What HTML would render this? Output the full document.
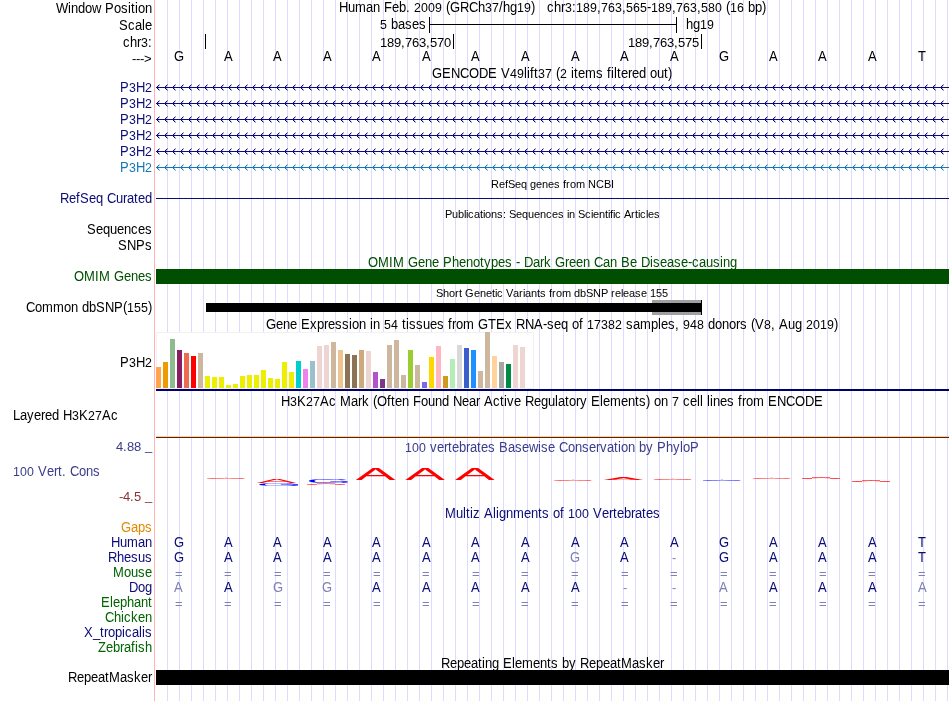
<!DOCTYPE html>
<html lang="en"><head><meta charset="utf-8"><title>UCSC Genome Browser - hg19 chr3:189,763,565-189,763,580</title>
<style>
html,body{margin:0;padding:0;background:#fff;}
body{width:950px;height:701px;overflow:hidden;}
svg{display:block;will-change:transform;}
text{font-family:"Liberation Sans",Arial,Helvetica,sans-serif;font-size:13px;fill:#000;}
text{white-space:pre;}
.s{font-size:11px;}.d{font-size:12.4px;}
.nv{fill:#0c0c78;}.lb{fill:#1478b4;}.gr{fill:#005000;}.dg{fill:#006400;}.og{fill:#e08a00;}.pu{fill:#3c3c8c;}.br{fill:#8b3232;}.lt{fill:#8080b8;}
.g{shape-rendering:crispEdges;}
</style></head><body>
<svg width="950" height="701" viewBox="0 0 950 701">
<defs>
<pattern id="chvA" x="156" y="0" width="8" height="7" patternUnits="userSpaceOnUse" shape-rendering="crispEdges" fill="#0c0c78">
<rect x="1" y="2" width="1" height="3"/>
<rect x="2" y="1" width="1" height="1"/><rect x="2" y="5" width="1" height="1"/>
<rect x="2" y="2" width="1" height="1" opacity=".3"/><rect x="2" y="4" width="1" height="1" opacity=".3"/>
<rect x="3" y="0" width="1" height="1" opacity=".45"/><rect x="3" y="6" width="1" height="1" opacity=".45"/>
<rect x="3" y="1" width="1" height="1" opacity=".2"/><rect x="3" y="5" width="1" height="1" opacity=".2"/>
</pattern>
<pattern id="chvB" x="156" y="0" width="8" height="7" patternUnits="userSpaceOnUse" shape-rendering="crispEdges" fill="#1478b4">
<rect x="1" y="2" width="1" height="3"/>
<rect x="2" y="1" width="1" height="1"/><rect x="2" y="5" width="1" height="1"/>
<rect x="2" y="2" width="1" height="1" opacity=".3"/><rect x="2" y="4" width="1" height="1" opacity=".3"/>
<rect x="3" y="0" width="1" height="1" opacity=".45"/><rect x="3" y="6" width="1" height="1" opacity=".45"/>
<rect x="3" y="1" width="1" height="1" opacity=".2"/><rect x="3" y="5" width="1" height="1" opacity=".2"/>
</pattern>
</defs>
<rect width="950" height="701" fill="#fff"/>
<g class="g" fill="#dcdcff">
<rect x="167" y="0" width="1" height="701"/>
<rect x="179" y="0" width="1" height="701"/>
<rect x="191" y="0" width="1" height="701"/>
<rect x="203" y="0" width="1" height="701"/>
<rect x="215" y="0" width="1" height="701"/>
<rect x="227" y="0" width="1" height="701"/>
<rect x="239" y="0" width="1" height="701"/>
<rect x="251" y="0" width="1" height="701"/>
<rect x="263" y="0" width="1" height="701"/>
<rect x="275" y="0" width="1" height="701"/>
<rect x="287" y="0" width="1" height="701"/>
<rect x="299" y="0" width="1" height="701"/>
<rect x="311" y="0" width="1" height="701"/>
<rect x="323" y="0" width="1" height="701"/>
<rect x="335" y="0" width="1" height="701"/>
<rect x="347" y="0" width="1" height="701"/>
<rect x="359" y="0" width="1" height="701"/>
<rect x="371" y="0" width="1" height="701"/>
<rect x="383" y="0" width="1" height="701"/>
<rect x="395" y="0" width="1" height="701"/>
<rect x="407" y="0" width="1" height="701"/>
<rect x="419" y="0" width="1" height="701"/>
<rect x="431" y="0" width="1" height="701"/>
<rect x="443" y="0" width="1" height="701"/>
<rect x="455" y="0" width="1" height="701"/>
<rect x="467" y="0" width="1" height="701"/>
<rect x="479" y="0" width="1" height="701"/>
<rect x="491" y="0" width="1" height="701"/>
<rect x="503" y="0" width="1" height="701"/>
<rect x="515" y="0" width="1" height="701"/>
<rect x="527" y="0" width="1" height="701"/>
<rect x="539" y="0" width="1" height="701"/>
<rect x="551" y="0" width="1" height="701"/>
<rect x="563" y="0" width="1" height="701"/>
<rect x="575" y="0" width="1" height="701"/>
<rect x="587" y="0" width="1" height="701"/>
<rect x="599" y="0" width="1" height="701"/>
<rect x="611" y="0" width="1" height="701"/>
<rect x="623" y="0" width="1" height="701"/>
<rect x="635" y="0" width="1" height="701"/>
<rect x="647" y="0" width="1" height="701"/>
<rect x="659" y="0" width="1" height="701"/>
<rect x="671" y="0" width="1" height="701"/>
<rect x="683" y="0" width="1" height="701"/>
<rect x="695" y="0" width="1" height="701"/>
<rect x="707" y="0" width="1" height="701"/>
<rect x="719" y="0" width="1" height="701"/>
<rect x="731" y="0" width="1" height="701"/>
<rect x="743" y="0" width="1" height="701"/>
<rect x="755" y="0" width="1" height="701"/>
<rect x="767" y="0" width="1" height="701"/>
<rect x="779" y="0" width="1" height="701"/>
<rect x="791" y="0" width="1" height="701"/>
<rect x="803" y="0" width="1" height="701"/>
<rect x="815" y="0" width="1" height="701"/>
<rect x="827" y="0" width="1" height="701"/>
<rect x="839" y="0" width="1" height="701"/>
<rect x="851" y="0" width="1" height="701"/>
<rect x="863" y="0" width="1" height="701"/>
<rect x="875" y="0" width="1" height="701"/>
<rect x="887" y="0" width="1" height="701"/>
<rect x="899" y="0" width="1" height="701"/>
<rect x="911" y="0" width="1" height="701"/>
<rect x="923" y="0" width="1" height="701"/>
<rect x="935" y="0" width="1" height="701"/>
<rect x="947" y="0" width="1" height="701"/>
</g>
<rect class="g" x="154" y="0" width="1" height="701" fill="#ffb4b4"/>
<g class="g" fill="#000">
<rect x="429" y="17" width="1" height="16"/><rect x="676" y="17" width="1" height="16"/><rect x="429" y="24" width="248" height="1"/>
<rect x="205" y="34" width="1" height="15"/><rect x="453" y="34" width="1" height="15"/><rect x="701" y="34" width="1" height="15"/>
</g>
<text transform="matrix(1,0,0,1.08,0,-1.04)" x="56 68 71 78 85 92 101 105 114 121 128 131 135 138 145" y="13">Window Position</text>
<text transform="matrix(1,0,0,1.08,0,-2.40)" x="119 128 135 142 145" y="30">Scale</text>
<text transform="matrix(1,0,0,1.08,0,-3.76)" x="123 130 137 141 148" y="47">chr<tspan class="d">3</tspan>:</text>
<text x="132 136 140 144" y="63">---&gt;</text>
<text transform="matrix(1,0,0,1.08,0,-0.96)" x="339 348 355 366 373 380 384 392 399 406 410 414 421 428 435 442 446 450 460 469 478 485 492 499 503 510 517 524 531" y="12">Human Feb. <tspan class="d">2009</tspan> (GRCh<tspan class="d">37</tspan>/hg<tspan class="d">19</tspan>)</text>
<text transform="matrix(1,0,0,1.08,0,-0.96)" x="547 554 561 565 572 576 583 590 597 601 608 615 622 626 633 640 647 651 658 665 672 676 683 690 697 701 708 715 722 726 730 737 744 748 755 762" y="12">chr<tspan class="d">3</tspan>:<tspan class="d">189</tspan>,<tspan class="d">763</tspan>,<tspan class="d">565</tspan>-<tspan class="d">189</tspan>,<tspan class="d">763</tspan>,<tspan class="d">580</tspan> (<tspan class="d">16</tspan> bp)</text>
<text transform="matrix(1,0,0,1.08,0,-2.32)" x="380 387 391 398 405 412 419" y="29"><tspan class="d">5</tspan> bases</text>
<text transform="matrix(1,0,0,1.08,0,-2.32)" x="686 693 700 707" y="29">hg<tspan class="d">19</tspan></text>
<text x="380 387 394 401 405 412 419 426 430 437 444" y="47">189,763,570</text>
<text x="628 635 642 649 653 660 667 674 678 685 692" y="47">189,763,575</text>
<text transform="matrix(1,0,0,1.08,0,-4.88)" x="174" y="61">G</text>
<text transform="matrix(1,0,0,1.08,0,-4.88)" x="224" y="61">A</text>
<text transform="matrix(1,0,0,1.08,0,-4.88)" x="273" y="61">A</text>
<text transform="matrix(1,0,0,1.08,0,-4.88)" x="323" y="61">A</text>
<text transform="matrix(1,0,0,1.08,0,-4.88)" x="372" y="61">A</text>
<text transform="matrix(1,0,0,1.08,0,-4.88)" x="422" y="61">A</text>
<text transform="matrix(1,0,0,1.08,0,-4.88)" x="471" y="61">A</text>
<text transform="matrix(1,0,0,1.08,0,-4.88)" x="521" y="61">A</text>
<text transform="matrix(1,0,0,1.08,0,-4.88)" x="571" y="61">A</text>
<text transform="matrix(1,0,0,1.08,0,-4.88)" x="620" y="61">A</text>
<text transform="matrix(1,0,0,1.08,0,-4.88)" x="670" y="61">A</text>
<text transform="matrix(1,0,0,1.08,0,-4.88)" x="719" y="61">G</text>
<text transform="matrix(1,0,0,1.08,0,-4.88)" x="769" y="61">A</text>
<text transform="matrix(1,0,0,1.08,0,-4.88)" x="818" y="61">A</text>
<text transform="matrix(1,0,0,1.08,0,-4.88)" x="868" y="61">A</text>
<text transform="matrix(1,0,0,1.08,0,-4.88)" x="918" y="61">T</text>
<text transform="matrix(1,0,0,1.08,0,-6.24)" x="432 442 451 460 469 479 488 497 501 510 517 524 527 530 534 538 545 552 556 560 567 571 574 578 585 596 603 607 611 614 617 621 628 632 639 646 650 657 664 668" y="78">GENCODE V<tspan class="d">49</tspan>lift<tspan class="d">37</tspan> (<tspan class="d">2</tspan> items filtered out)</text>
<text transform="matrix(1,0,0,1.08,0,-7.36)" x="120 129 136 145" y="92" class="nv">P<tspan class="d">3</tspan>H<tspan class="d">2</tspan></text>
<rect class="g" x="156" y="87" width="793" height="1" fill="#0c0c78"/><rect x="156" y="0" width="793" height="7" fill="url(#chvA)" transform="translate(0,84)"/>
<text transform="matrix(1,0,0,1.08,0,-8.64)" x="120 129 136 145" y="108" class="nv">P<tspan class="d">3</tspan>H<tspan class="d">2</tspan></text>
<rect class="g" x="156" y="103" width="793" height="1" fill="#0c0c78"/><rect x="156" y="0" width="793" height="7" fill="url(#chvA)" transform="translate(0,100)"/>
<text transform="matrix(1,0,0,1.08,0,-9.92)" x="120 129 136 145" y="124" class="nv">P<tspan class="d">3</tspan>H<tspan class="d">2</tspan></text>
<rect class="g" x="156" y="119" width="793" height="1" fill="#0c0c78"/><rect x="156" y="0" width="793" height="7" fill="url(#chvA)" transform="translate(0,116)"/>
<text transform="matrix(1,0,0,1.08,0,-11.20)" x="120 129 136 145" y="140" class="nv">P<tspan class="d">3</tspan>H<tspan class="d">2</tspan></text>
<rect class="g" x="156" y="135" width="793" height="1" fill="#0c0c78"/><rect x="156" y="0" width="793" height="7" fill="url(#chvA)" transform="translate(0,132)"/>
<text transform="matrix(1,0,0,1.08,0,-12.48)" x="120 129 136 145" y="156" class="nv">P<tspan class="d">3</tspan>H<tspan class="d">2</tspan></text>
<rect class="g" x="156" y="151" width="793" height="1" fill="#0c0c78"/><rect x="156" y="0" width="793" height="7" fill="url(#chvA)" transform="translate(0,148)"/>
<text transform="matrix(1,0,0,1.08,0,-13.76)" x="120 129 136 145" y="172" class="lb">P<tspan class="d">3</tspan>H<tspan class="d">2</tspan></text>
<rect class="g" x="156" y="167" width="793" height="1" fill="#1478b4"/><rect x="156" y="0" width="793" height="7" fill="url(#chvB)" transform="translate(0,164)"/>
<text transform="matrix(1,0,0,1.03,0,-5.64)" x="491 499 505 508 515 521 527 530 536 542 548 554 560 563 566 570 576 585 588 596 604 611" y="188" class="s">RefSeq genes from NCBI</text>
<text transform="matrix(1,0,0,1.08,0,-16.24)" x="60 69 76 80 89 96 103 107 116 123 127 134 138 145" y="203" class="nv">RefSeq Curated</text>
<rect class="g" x="156" y="198" width="793" height="1" fill="#0c0c78"/>
<text transform="matrix(1,0,0,1.03,0,-6.54)" x="445 452 458 464 466 468 474 480 483 485 491 497 503 506 509 516 522 528 534 540 546 552 558 564 567 569 575 578 585 591 593 599 605 608 610 613 615 621 624 631 635 638 640 646 648 654" y="218" class="s">Publications: Sequences in Scientific Articles</text>
<text transform="matrix(1,0,0,1.08,0,-18.72)" x="87 96 103 110 117 124 131 138 145" y="234">Sequences</text>
<text transform="matrix(1,0,0,1.08,0,-20.00)" x="118 127 136 145" y="250">SNPs</text>
<text transform="matrix(1,0,0,1.08,0,-21.36)" x="368 378 389 393 404 408 418 425 432 439 443 452 459 466 473 480 484 491 498 505 512 516 520 524 533 540 544 551 555 565 569 576 583 590 594 603 610 617 621 630 637 641 650 653 660 667 674 681 688 692 699 706 713 720 723 730" y="267" class="gr">OMIM Gene Phenotypes - Dark Green Can Be Disease-causing</text>
<text transform="matrix(1,0,0,1.08,0,-22.48)" x="74 84 95 99 110 114 124 131 138 145" y="281" class="gr">OMIM Genes</text>
<rect class="g" x="156" y="269" width="793" height="15" fill="#004f00"/>
<text transform="matrix(1,0,0,1.03,0,-8.91)" x="436 443 449 455 459 462 465 474 480 486 492 495 497 503 506 513 519 523 525 531 537 540 546 549 552 556 562 571 574 580 586 593 601 608 611 615 621 623 629 635 641 647 650 656 662" y="297" class="s">Short Genetic Variants from dbSNP release 155</text>
<text transform="matrix(1,0,0,1.08,0,-24.96)" x="26 35 42 53 64 71 78 82 89 96 105 114 123 127 134 141 148" y="312">Common dbSNP(<tspan class="d">155</tspan>)</text>
<g class="g"><rect x="652" y="300" width="50" height="15" fill="#a0a0a0"/><rect x="206" y="303" width="496" height="9" fill="#000"/><rect x="701" y="300" width="1" height="15" fill="#000"/></g>
<text transform="matrix(1,0,0,1.08,0,-26.32)" x="266 276 283 290 297 301 310 317 324 328 335 342 349 352 359 366 370 373 380 384 391 398 402 406 409 416 423 430 437 444 448 452 456 463 474 478 488 496 505 512 516 525 534 543 547 554 561 568 572 579 583 587 594 601 608 615 622 626 633 640 651 658 661 668 675 679 683 690 697 704 708 715 722 729 736 740 747 751 755 764 771 775 779 788 795 802 806 813 820 827 834" y="329">Gene Expression in <tspan class="d">54</tspan> tissues from GTEx RNA-seq of <tspan class="d">17382</tspan> samples, <tspan class="d">948</tspan> donors (V<tspan class="d">8</tspan>, Aug <tspan class="d">2019</tspan>)</text>
<g class="g">
<rect x="156.5" y="332.5" width="377" height="56" fill="#fff" stroke="#f1f1f1" stroke-width="1"/>
<rect x="156" y="367" width="5" height="21" fill="#FFA54F"/>
<rect x="163" y="362" width="5" height="26" fill="#EE9A00"/>
<rect x="170" y="339" width="5" height="49" fill="#8FBC8F"/>
<rect x="177" y="350" width="5" height="38" fill="#8B1C62"/>
<rect x="184" y="353" width="5" height="35" fill="#EE6A50"/>
<rect x="191" y="356" width="5" height="32" fill="#FF0000"/>
<rect x="198" y="353" width="5" height="35" fill="#CDB79E"/>
<rect x="205" y="376" width="5" height="12" fill="#EEEE00"/>
<rect x="212" y="377" width="5" height="11" fill="#EEEE00"/>
<rect x="219" y="377" width="5" height="11" fill="#EEEE00"/>
<rect x="226" y="385" width="5" height="3" fill="#EEEE00"/>
<rect x="233" y="384" width="5" height="4" fill="#EEEE00"/>
<rect x="240" y="376" width="5" height="12" fill="#EEEE00"/>
<rect x="247" y="375" width="5" height="13" fill="#EEEE00"/>
<rect x="254" y="375" width="5" height="13" fill="#EEEE00"/>
<rect x="261" y="370" width="5" height="18" fill="#EEEE00"/>
<rect x="268" y="378" width="5" height="10" fill="#EEEE00"/>
<rect x="275" y="379" width="5" height="9" fill="#EEEE00"/>
<rect x="282" y="362" width="5" height="26" fill="#EEEE00"/>
<rect x="289" y="372" width="5" height="16" fill="#EEEE00"/>
<rect x="296" y="361" width="5" height="27" fill="#00CDCD"/>
<rect x="303" y="369" width="5" height="19" fill="#EE82EE"/>
<rect x="310" y="361" width="5" height="27" fill="#9AC0CD"/>
<rect x="317" y="346" width="5" height="42" fill="#EED5D2"/>
<rect x="324" y="345" width="5" height="43" fill="#EED5D2"/>
<rect x="331" y="342" width="5" height="46" fill="#CDB79E"/>
<rect x="338" y="350" width="5" height="38" fill="#EEC591"/>
<rect x="345" y="354" width="5" height="34" fill="#8B7355"/>
<rect x="352" y="355" width="5" height="33" fill="#8B7355"/>
<rect x="359" y="350" width="5" height="38" fill="#CDAA7D"/>
<rect x="366" y="351" width="5" height="37" fill="#EED5D2"/>
<rect x="373" y="372" width="5" height="16" fill="#B452CD"/>
<rect x="380" y="379" width="5" height="9" fill="#7A378B"/>
<rect x="387" y="345" width="5" height="43" fill="#CDB79E"/>
<rect x="394" y="340" width="5" height="48" fill="#CDB79E"/>
<rect x="401" y="375" width="5" height="13" fill="#CDB79E"/>
<rect x="408" y="350" width="5" height="38" fill="#9ACD32"/>
<rect x="415" y="365" width="5" height="23" fill="#CDB79E"/>
<rect x="422" y="382" width="5" height="6" fill="#7A67EE"/>
<rect x="429" y="357" width="5" height="31" fill="#FFD700"/>
<rect x="436" y="346" width="5" height="42" fill="#FFB6C1"/>
<rect x="443" y="376" width="5" height="12" fill="#CD9B1D"/>
<rect x="450" y="359" width="5" height="29" fill="#B4EEB4"/>
<rect x="457" y="345" width="5" height="43" fill="#D9D9D9"/>
<rect x="464" y="348" width="5" height="40" fill="#3A5FCD"/>
<rect x="471" y="350" width="5" height="38" fill="#1E90FF"/>
<rect x="478" y="371" width="5" height="17" fill="#CDB79E"/>
<rect x="485" y="332" width="5" height="56" fill="#CDB79E"/>
<rect x="492" y="356" width="5" height="32" fill="#FFD39B"/>
<rect x="499" y="362" width="5" height="26" fill="#A6A6A6"/>
<rect x="506" y="364" width="5" height="24" fill="#008B45"/>
<rect x="513" y="345" width="5" height="43" fill="#EED5D2"/>
<rect x="520" y="347" width="5" height="41" fill="#EED5D2"/>
<rect x="156" y="389" width="793" height="2" fill="#00006a"/>
</g>
<text transform="matrix(1,0,0,1.08,0,-29.36)" x="120 129 136 145" y="367">P<tspan class="d">3</tspan>H<tspan class="d">2</tspan></text>
<text transform="matrix(1,0,0,1.08,0,-32.48)" x="281 290 297 306 313 320 329 336 340 351 358 362 369 373 377 387 391 395 402 409 413 421 428 435 442 449 453 462 469 476 480 484 493 500 504 507 514 521 525 534 541 548 555 558 565 569 576 580 587 591 600 603 610 621 628 635 639 646 650 654 661 668 672 679 683 690 697 700 703 707 710 713 720 727 734 738 742 746 753 764 768 777 786 795 805 814" y="406">H<tspan class="d">3</tspan>K<tspan class="d">27</tspan>Ac Mark (Often Found Near Active Regulatory Elements) on <tspan class="d">7</tspan> cell lines from ENCODE</text>
<text transform="matrix(1,0,0,1.08,0,-33.60)" x="13 20 27 34 41 45 52 59 63 72 79 88 95 102 111" y="420">Layered H<tspan class="d">3</tspan>K<tspan class="d">27</tspan>Ac</text>
<g class="g"><rect x="156" y="436" width="793" height="1" fill="#ffd27a"/><rect x="156" y="437" width="793" height="1" fill="#5a1e28"/></g>
<text x="116 123 127 134 141" y="451" class="pu">4.88 </text>
<text x="145" y="450" class="pu">_</text>
<text transform="matrix(1,0,0,1.08,0,-36.16)" x="405 412 419 426 430 437 444 448 452 459 466 470 477 481 488 495 499 508 515 522 529 538 541 548 555 559 568 575 582 589 596 600 607 614 618 621 628 635 639 646 653 657 666 673 680 683 690" y="452" class="pu"><tspan class="d">100</tspan> vertebrates Basewise Conservation by PhyloP</text>
<text transform="matrix(1,0,0,1.08,0,-38.08)" x="13 20 27 34 38 47 54 58 62 66 70 79 86 93" y="476" class="pu"><tspan class="d">100</tspan> Vert. Cons</text>
<text x="119 123 130 134 141" y="501" class="br">-4.5 </text>
<text x="145" y="500" class="br">_</text>
<rect class="g" x="207" y="478" width="37" height="1" fill="#ff0000" opacity="0.35"/>
<text transform="translate(226.9,479.1) scale(5.957,0.174)" x="0" y="0" style="font-size:10px;text-anchor:middle;fill:#ff0000">A</text>
<text transform="translate(276.5,482.8) scale(5.957,0.465)" x="0" y="0" style="font-size:10px;text-anchor:middle;fill:#ff0000">A</text>
<text transform="translate(279.4,486.2) scale(5.957,0.378)" x="0" y="0" style="font-size:10px;text-anchor:middle;fill:#0000ff">G</text>
<text transform="translate(329.0,483.2) scale(5.957,0.494)" x="0" y="0" style="font-size:10px;text-anchor:middle;fill:#0000ff">G</text>
<text transform="translate(375.6,480.0) scale(5.957,1.599)" x="0" y="0" style="font-size:10px;text-anchor:middle;fill:#ff0000">A</text>
<text transform="translate(425.2,480.0) scale(5.957,1.599)" x="0" y="0" style="font-size:10px;text-anchor:middle;fill:#ff0000">A</text>
<text transform="translate(474.8,480.0) scale(5.957,1.599)" x="0" y="0" style="font-size:10px;text-anchor:middle;fill:#ff0000">A</text>
<rect class="g" x="554" y="480" width="37" height="1" fill="#ff0000" opacity="0.35"/>
<text transform="translate(573.9,481.1) scale(5.957,0.174)" x="0" y="0" style="font-size:10px;text-anchor:middle;fill:#ff0000">A</text>
<text transform="translate(623.4,479.9) scale(5.957,0.436)" x="0" y="0" style="font-size:10px;text-anchor:middle;fill:#ff0000">A</text>
<rect class="g" x="654" y="479" width="37" height="1" fill="#ff0000" opacity="0.35"/>
<text transform="translate(673.0,480.1) scale(5.957,0.174)" x="0" y="0" style="font-size:10px;text-anchor:middle;fill:#ff0000">A</text>
<rect class="g" x="703" y="480" width="37" height="1" fill="#0000ff" opacity="0.35"/>
<text transform="translate(722.6,481.1) scale(5.957,0.174)" x="0" y="0" style="font-size:10px;text-anchor:middle;fill:#0000ff">A</text>
<rect class="g" x="753" y="478" width="37" height="1" fill="#ff0000" opacity="0.35"/>
<text transform="translate(772.1,479.1) scale(5.957,0.174)" x="0" y="0" style="font-size:10px;text-anchor:middle;fill:#ff0000">A</text>
<g class="g" fill="#ff0000" opacity="0.6"><rect x="802" y="478" width="10" height="1"/><rect x="812" y="477" width="18" height="1"/><rect x="830" y="478" width="10" height="1"/></g>
<text transform="translate(821.7,478.9) scale(5.957,0.247)" x="0" y="0" style="font-size:10px;text-anchor:middle;fill:#ff0000">A</text>
<g class="g" fill="#ff0000" opacity="0.6"><rect x="852" y="481" width="10" height="1"/><rect x="862" y="480" width="18" height="1"/><rect x="880" y="481" width="10" height="1"/></g>
<text transform="translate(871.3,481.9) scale(5.957,0.247)" x="0" y="0" style="font-size:10px;text-anchor:middle;fill:#ff0000">A</text>
<g class="g" fill="#ff0000" opacity="0.45"><rect x="307" y="484" width="10" height="1"/><rect x="317" y="483" width="18" height="1"/><rect x="335" y="484" width="10" height="1"/></g>
<text transform="translate(326.1,484.9) scale(5.957,0.247)" x="0" y="0" style="font-size:10px;text-anchor:middle;fill:#ff0000">A</text>
<text transform="matrix(1,0,0,1.08,0,-41.44)" x="445 456 463 466 470 473 480 484 493 496 499 506 513 524 531 538 542 549 553 560 564 568 575 582 589 593 602 609 613 617 624 631 635 642 646 653" y="518" class="nv">Multiz Alignments of <tspan class="d">100</tspan> Vertebrates</text>
<text transform="matrix(1,0,0,1.08,0,-42.56)" x="121 131 138 145" y="532" class="og">Gaps</text>
<text transform="matrix(1,0,0,1.08,0,-43.76)" x="111 120 127 138 145" y="547" class="nv">Human</text>
<text transform="matrix(1,0,0,1.08,0,-43.76)" x="174" y="547" class="nv">G</text>
<text transform="matrix(1,0,0,1.08,0,-43.76)" x="224" y="547" class="nv">A</text>
<text transform="matrix(1,0,0,1.08,0,-43.76)" x="273" y="547" class="nv">A</text>
<text transform="matrix(1,0,0,1.08,0,-43.76)" x="323" y="547" class="nv">A</text>
<text transform="matrix(1,0,0,1.08,0,-43.76)" x="372" y="547" class="nv">A</text>
<text transform="matrix(1,0,0,1.08,0,-43.76)" x="422" y="547" class="nv">A</text>
<text transform="matrix(1,0,0,1.08,0,-43.76)" x="471" y="547" class="nv">A</text>
<text transform="matrix(1,0,0,1.08,0,-43.76)" x="521" y="547" class="nv">A</text>
<text transform="matrix(1,0,0,1.08,0,-43.76)" x="571" y="547" class="nv">A</text>
<text transform="matrix(1,0,0,1.08,0,-43.76)" x="620" y="547" class="nv">A</text>
<text transform="matrix(1,0,0,1.08,0,-43.76)" x="670" y="547" class="nv">A</text>
<text transform="matrix(1,0,0,1.08,0,-43.76)" x="719" y="547" class="nv">G</text>
<text transform="matrix(1,0,0,1.08,0,-43.76)" x="769" y="547" class="nv">A</text>
<text transform="matrix(1,0,0,1.08,0,-43.76)" x="818" y="547" class="nv">A</text>
<text transform="matrix(1,0,0,1.08,0,-43.76)" x="868" y="547" class="nv">A</text>
<text transform="matrix(1,0,0,1.08,0,-43.76)" x="918" y="547" class="nv">T</text>
<text transform="matrix(1,0,0,1.08,0,-44.96)" x="108 117 124 131 138 145" y="562" class="nv">Rhesus</text>
<text transform="matrix(1,0,0,1.08,0,-44.96)" x="174" y="562" class="nv">G</text>
<text transform="matrix(1,0,0,1.08,0,-44.96)" x="224" y="562" class="nv">A</text>
<text transform="matrix(1,0,0,1.08,0,-44.96)" x="273" y="562" class="nv">A</text>
<text transform="matrix(1,0,0,1.08,0,-44.96)" x="323" y="562" class="nv">A</text>
<text transform="matrix(1,0,0,1.08,0,-44.96)" x="372" y="562" class="nv">A</text>
<text transform="matrix(1,0,0,1.08,0,-44.96)" x="422" y="562" class="nv">A</text>
<text transform="matrix(1,0,0,1.08,0,-44.96)" x="471" y="562" class="nv">A</text>
<text transform="matrix(1,0,0,1.08,0,-44.96)" x="521" y="562" class="nv">A</text>
<text transform="matrix(1,0,0,1.08,0,-44.96)" x="570" y="562" class="lt">G</text>
<text transform="matrix(1,0,0,1.08,0,-44.96)" x="620" y="562" class="nv">A</text>
<text x="672" y="562" class="lt">-</text>
<text transform="matrix(1,0,0,1.08,0,-44.96)" x="719" y="562" class="nv">G</text>
<text transform="matrix(1,0,0,1.08,0,-44.96)" x="769" y="562" class="nv">A</text>
<text transform="matrix(1,0,0,1.08,0,-44.96)" x="818" y="562" class="nv">A</text>
<text transform="matrix(1,0,0,1.08,0,-44.96)" x="868" y="562" class="nv">A</text>
<text transform="matrix(1,0,0,1.08,0,-44.96)" x="918" y="562" class="nv">T</text>
<text transform="matrix(1,0,0,1.08,0,-46.16)" x="113 124 131 138 145" y="577" class="dg">Mouse</text>
<text x="175" y="578" class="lt">=</text>
<text x="224" y="578" class="lt">=</text>
<text x="274" y="578" class="lt">=</text>
<text x="323" y="578" class="lt">=</text>
<text x="373" y="578" class="lt">=</text>
<text x="422" y="578" class="lt">=</text>
<text x="472" y="578" class="lt">=</text>
<text x="521" y="578" class="lt">=</text>
<text x="571" y="578" class="lt">=</text>
<text x="621" y="578" class="lt">=</text>
<text x="670" y="578" class="lt">=</text>
<text x="720" y="578" class="lt">=</text>
<text x="769" y="578" class="lt">=</text>
<text x="819" y="578" class="lt">=</text>
<text x="868" y="578" class="lt">=</text>
<text x="918" y="578" class="lt">=</text>
<text transform="matrix(1,0,0,1.08,0,-47.36)" x="129 138 145" y="592" class="nv">Dog</text>
<text transform="matrix(1,0,0,1.08,0,-47.36)" x="174" y="592" class="lt">A</text>
<text transform="matrix(1,0,0,1.08,0,-47.36)" x="224" y="592" class="nv">A</text>
<text transform="matrix(1,0,0,1.08,0,-47.36)" x="273" y="592" class="lt">G</text>
<text transform="matrix(1,0,0,1.08,0,-47.36)" x="322" y="592" class="lt">G</text>
<text transform="matrix(1,0,0,1.08,0,-47.36)" x="372" y="592" class="nv">A</text>
<text transform="matrix(1,0,0,1.08,0,-47.36)" x="422" y="592" class="nv">A</text>
<text transform="matrix(1,0,0,1.08,0,-47.36)" x="471" y="592" class="nv">A</text>
<text transform="matrix(1,0,0,1.08,0,-47.36)" x="521" y="592" class="nv">A</text>
<text transform="matrix(1,0,0,1.08,0,-47.36)" x="571" y="592" class="nv">A</text>
<text x="623" y="592" class="lt">-</text>
<text x="672" y="592" class="lt">-</text>
<text transform="matrix(1,0,0,1.08,0,-47.36)" x="719" y="592" class="lt">A</text>
<text transform="matrix(1,0,0,1.08,0,-47.36)" x="769" y="592" class="nv">A</text>
<text transform="matrix(1,0,0,1.08,0,-47.36)" x="818" y="592" class="nv">A</text>
<text transform="matrix(1,0,0,1.08,0,-47.36)" x="868" y="592" class="nv">A</text>
<text transform="matrix(1,0,0,1.08,0,-47.36)" x="918" y="592" class="lt">A</text>
<text transform="matrix(1,0,0,1.08,0,-48.56)" x="101 110 113 120 127 134 141 148" y="607" class="dg">Elephant</text>
<text x="175" y="608" class="lt">=</text>
<text x="224" y="608" class="lt">=</text>
<text x="274" y="608" class="lt">=</text>
<text x="323" y="608" class="lt">=</text>
<text x="373" y="608" class="lt">=</text>
<text x="422" y="608" class="lt">=</text>
<text x="472" y="608" class="lt">=</text>
<text x="521" y="608" class="lt">=</text>
<text x="571" y="608" class="lt">=</text>
<text x="621" y="608" class="lt">=</text>
<text x="670" y="608" class="lt">=</text>
<text x="720" y="608" class="lt">=</text>
<text x="769" y="608" class="lt">=</text>
<text x="819" y="608" class="lt">=</text>
<text x="868" y="608" class="lt">=</text>
<text x="918" y="608" class="lt">=</text>
<text transform="matrix(1,0,0,1.08,0,-49.76)" x="105 114 121 124 131 138 145" y="622" class="dg">Chicken</text>
<text transform="matrix(1,0,0,1.08,0,-50.96)" x="84 93 100 104 108 115 122 125 132 139 142 145" y="637" class="nv">X_tropicalis</text>
<text transform="matrix(1,0,0,1.08,0,-52.16)" x="98 106 113 120 124 131 135 138 145" y="652" class="dg">Zebrafish</text>
<text transform="matrix(1,0,0,1.08,0,-53.44)" x="441 450 457 464 471 478 482 485 492 499 503 512 515 522 533 540 547 551 558 562 569 576 580 589 596 603 610 617 621 632 639 646 653 660" y="668">Repeating Elements by RepeatMasker</text>
<text transform="matrix(1,0,0,1.08,0,-54.56)" x="68 77 84 91 98 105 109 120 127 134 141 148" y="682">RepeatMasker</text>
<rect class="g" x="156" y="670" width="793" height="15" fill="#000"/>
</svg></body></html>
